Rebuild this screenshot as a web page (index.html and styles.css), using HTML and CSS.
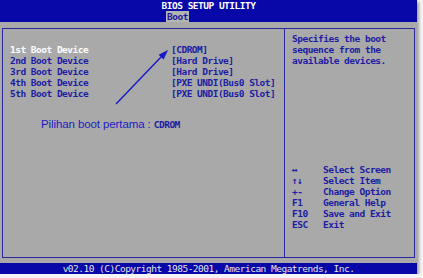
FILE: index.html
```html
<!DOCTYPE html>
<html lang="en">
<head>
  <meta charset="UTF-8" />
  <meta name="viewport" content="width=device-width, initial-scale=1" />
  <title>BIOS Setup Utility - Boot</title>
  <link rel="stylesheet" href="styles.css">
</head>
<body>
  <div class="screen">
    <header class="topbar">
      <div class="title">BIOS SETUP UTILITY</div>
      <div class="tabs"><span class="tab active">Boot</span></div>
    </header>

    <main class="body">
      <div class="frame">
        <section class="options">
          <div class="row selected"><span class="label">1st Boot Device</span><span class="value">[CDROM]</span></div>
          <div class="row"><span class="label">2nd Boot Device</span><span class="value">[Hard Drive]</span></div>
          <div class="row"><span class="label">3rd Boot Device</span><span class="value">[Hard Drive]</span></div>
          <div class="row"><span class="label">4th Boot Device</span><span class="value">[PXE UNDI(Bus0 Slot]</span></div>
          <div class="row"><span class="label">5th Boot Device</span><span class="value">[PXE UNDI(Bus0 Slot]</span></div>

          <p class="note">Pilihan boot pertama : <span class="mono">CDROM</span></p>

          <svg class="arrow" viewBox="0 0 281 228" width="281" height="228">
            <line x1="113" y1="75" x2="159" y2="27" stroke="#1818c8" stroke-width="1.4" />
            <polygon points="165,21 160.6,30.6 155.6,25.8" fill="#1818c8" />
          </svg>
        </section>

        <aside class="help">
          <p class="desc">Specifies the boot<br>sequence from the<br>available devices.</p>
          <div class="keys">
            <span class="key">&harr;</span><span>Select Screen</span>
            <span class="key">&uarr;&darr;</span><span>Select Item</span>
            <span class="key">+-</span><span>Change Option</span>
            <span class="key">F1</span><span>General Help</span>
            <span class="key">F10</span><span>Save and Exit</span>
            <span class="key">ESC</span><span>Exit</span>
          </div>
        </aside>
      </div>
    </main>

    <footer class="copyright">v02.10 (C)Copyright 1985-2001, American Megatrends, Inc.</footer>
  </div>
</body>
</html>
```

FILE: styles.css
```css
body {
  margin: 0;
  background: #f4f4f4;
  font-family: 'DejaVu Sans Mono', 'Liberation Mono', monospace;
  font-size: 9.5px;
  font-weight: bold;
  letter-spacing: -0.51px;
  line-height: 11px;
}
.screen {
  width: 417px;
  height: 274px;
  display: flex;
  flex-direction: column;
  background: #a9a9a9;
  box-shadow: 2px 2px 3px rgba(0,0,0,0.35);
}
.topbar {
  background: #0808a8;
  height: 22px;
}
.title {
  color: #ffffff;
  text-align: center;
}
.tabs {
  padding-left: 166px;
}
.tab.active {
  background: #b4b4b4;
  color: #1a1a9c;
  padding: 0 1px;
}
.body {
  flex: 1;
  padding: 6px 2px 5px 2px;
  display: flex;
}
.frame {
  flex: 1;
  display: flex;
  border: 1px solid #28289c;
}
.options {
  position: relative;
  width: 281px;
  padding: 15px 0 0 7px;
  box-sizing: border-box;
}
.row {
  display: flex;
  color: #1c1ca4;
}
.row.selected {
  color: #ffffff;
}
.label {
  width: 161px;
}
.value {
  color: #1c1ca4;
}
.note {
  margin: 19px 0 0 31px;
  font-family: 'Liberation Sans', Arial, sans-serif;
  font-weight: normal;
  font-size: 11.5px;
  letter-spacing: -0.1px;
  line-height: 13px;
  color: #1c1cc4;
}
.note .mono {
  font-family: 'DejaVu Sans Mono', 'Liberation Mono', monospace;
  font-weight: bold;
  font-size: 9.5px;
  letter-spacing: -0.51px;
  color: #1c1ca4;
}
.arrow {
  position: absolute;
  left: 0;
  top: 0;
  pointer-events: none;
}
.help {
  flex: 1;
  border-left: 1px solid #28289c;
  padding: 4px 0 0 7px;
  color: #1c1ca4;
}
.desc {
  margin: 0;
}
.keys {
  display: grid;
  grid-template-columns: 31px auto;
  margin-top: 98px;
}
.copyright {
  background: #0808a8;
  color: #e4e4e4;
  font-weight: normal;
  text-align: center;
  height: 11px;
}
```
